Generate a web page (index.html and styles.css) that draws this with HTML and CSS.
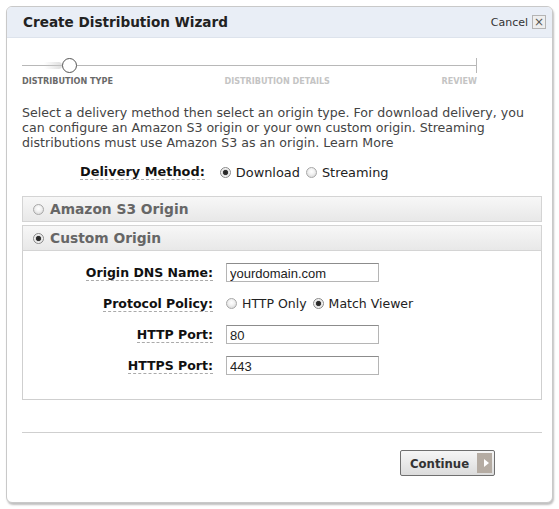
FILE: index.html
```
<!DOCTYPE html>
<html>
<head>
<meta charset="utf-8">
<link rel="stylesheet" href="styles.css">
</head>
<body>
<div class="dialog">
  <div class="header">
    <h1 class="title">Create Distribution Wizard</h1>
    <a class="cancel">Cancel <span class="close">×</span></a>
  </div>
  <div class="content">
    <div class="steps">
      <div class="track">
        <span class="trail"></span>
        <span class="knob"></span>
        <span class="tick"></span>
      </div>
      <div class="step-labels">
        <span class="step current">DISTRIBUTION TYPE</span>
        <span class="step">DISTRIBUTION DETAILS</span>
        <span class="step">REVIEW</span>
      </div>
    </div>
    <p class="intro">Select a delivery method then select an origin type. For download delivery, you can configure an Amazon S3 origin or your own custom origin. Streaming distributions must use Amazon S3 as an origin. <a class="link">Learn More</a></p>
    <div class="delivery">
      <span class="label">Delivery Method:</span>
      <label class="opt"><input type="radio" name="dm" checked> Download</label>
      <label class="opt"><input type="radio" name="dm"> Streaming</label>
    </div>
    <div class="accordion">
      <div class="acc-head"><input type="radio" name="origin"> Amazon S3 Origin</div>
      <div class="acc-head open"><input type="radio" name="origin" checked> Custom Origin</div>
      <div class="acc-panel">
        <div class="form-row">
          <span class="flabel"><span class="label">Origin DNS Name:</span></span>
          <input class="text" type="text" value="yourdomain.com">
        </div>
        <div class="form-row">
          <span class="flabel"><span class="label">Protocol Policy:</span></span>
          <span class="opts">
            <label class="opt"><input type="radio" name="pp"> HTTP Only</label>
            <label class="opt"><input type="radio" name="pp" checked> Match Viewer</label>
          </span>
        </div>
        <div class="form-row">
          <span class="flabel"><span class="label">HTTP Port:</span></span>
          <input class="text" type="text" value="80">
        </div>
        <div class="form-row">
          <span class="flabel"><span class="label">HTTPS Port:</span></span>
          <input class="text" type="text" value="443">
        </div>
      </div>
    </div>
    <div class="footer">
      <button class="continue"><span class="btn-text">Continue</span><span class="btn-arrow"></span></button>
    </div>
  </div>
</div>
</body>
</html>
```

FILE: styles.css
```
* { box-sizing: border-box; }
html, body { margin: 0; padding: 0; background: #fff; }
body {
  font-family: "DejaVu Sans", Verdana, sans-serif;
  color: #333;
  width: 559px;
  height: 509px;
  overflow: hidden;
}
.dialog {
  margin: 6px 0 0 6px;
  width: 547px;
  height: 497px;
  border: 1px solid #c9c9c9;
  border-radius: 6px;
  background: #fff;
  box-shadow: 1px 2px 2px rgba(0,0,0,0.25);
  overflow: hidden;
}
.header {
  height: 31px;
  background: #e9eef6;
  border-bottom: 1px solid #dde3ec;
  display: flex;
  align-items: center;
  justify-content: space-between;
  padding: 0 6px 0 16px;
}
.title {
  margin: 0;
  font-size: 13.6px;
  font-weight: bold;
  color: #222;
}
.cancel {
  display: flex;
  align-items: center;
  gap: 4px;
  font-size: 11px;
  color: #333;
}
.close {
  display: inline-flex;
  align-items: center;
  justify-content: center;
  width: 14px;
  height: 14px;
  border: 1px solid #b4b4b4;
  background: #eee;
  color: #555;
  font-size: 12px;
  line-height: 1;
}
.content {
  padding: 0 10px 0 15px;
}
.steps {
  width: 455px;
  margin-top: 20px;
}
.track {
  position: relative;
  height: 14px;
}
.track::before {
  content: "";
  position: absolute;
  left: 0;
  right: 0;
  top: 7px;
  height: 1px;
  background: #b8b8b8;
}
.trail {
  position: absolute;
  left: 22px;
  top: 4px;
  width: 18px;
  height: 7px;
  background: linear-gradient(to right, rgba(200,200,200,0), rgba(200,200,200,0.6));
  border-radius: 0 4px 4px 0;
}
.knob {
  position: absolute;
  left: 40px;
  top: 0;
  width: 15px;
  height: 15px;
  border-radius: 50%;
  border: 1px solid #555;
  background: #fff;
}
.tick {
  position: absolute;
  right: 0;
  top: 0;
  width: 1px;
  height: 15px;
  background: #b8b8b8;
}
.step-labels {
  display: flex;
  justify-content: space-between;
  margin-top: 3px;
}
.step {
  font-family: "DejaVu Sans Condensed", "DejaVu Sans", sans-serif;
  font-stretch: condensed;
  font-weight: bold;
  font-size: 9px;
  line-height: 12px;
  color: #c4c4c4;
}
.step.current { color: #6a6a6a; }
.intro {
  margin: 18px 0 0 0;
  font-size: 12.6px;
  line-height: 15px;
  color: #444;
  width: 505px;
}
.link { color: #444; }
.delivery {
  display: flex;
  align-items: center;
  margin-top: 12px;
  padding-left: 58px;
  font-size: 12.9px;
  height: 20px;
}
.label {
  font-weight: bold;
  color: #111;
  border-bottom: 1px dashed #aaa;
  line-height: 15px;
}
.delivery .label { margin-right: 15px; }
.opt {
  display: inline-flex;
  align-items: center;
  gap: 5px;
  margin-right: 6px;
  color: #222;
}
input[type=radio] {
  appearance: none;
  -webkit-appearance: none;
  margin: 0;
  width: 11px;
  height: 11px;
  border-radius: 50%;
  border: 1px solid #a8a8a8;
  background: radial-gradient(circle at 50% 40%, #fff 0, #f2f2f2 40%, #cfcfcf 100%);
  flex: none;
}
input[type=radio]:checked {
  border-color: #8a8a8a;
  background: radial-gradient(circle, #222 0, #333 2.2px, #dcdcdc 3px, #f5f5f5 4px, #c8c8c8 100%);
}
.accordion {
  margin-top: 14px;
  width: 520px;
}
.acc-head {
  display: flex;
  align-items: center;
  gap: 6px;
  height: 26px;
  padding-left: 10px;
  border: 1px solid #d4d4d4;
  background: linear-gradient(#f7f7f7, #e8e8e8);
  font-size: 13.8px;
  font-weight: bold;
  color: #666;
}
.acc-head.open { margin-top: 3px; }
.acc-panel {
  border: 1px solid #cfcfcf;
  border-top: none;
  height: 149px;
  padding-top: 12px;
}
.form-row {
  display: flex;
  align-items: center;
  height: 19px;
  margin-bottom: 12px;
  font-size: 12.5px;
}
.flabel {
  width: 190px;
  text-align: right;
  margin-right: 13px;
}
.opts { display: flex; align-items: center; }
.text {
  width: 153px;
  height: 19px;
  border: 1px solid #b5b5b5;
  border-top-color: #8c8c8c;
  padding: 1px 3px 0;
  font-family: "Liberation Sans", Arial, sans-serif;
  font-size: 13px;
  color: #222;
  background: #fff;
}
.footer {
  margin-top: 32px;
  width: 520px;
  border-top: 1px solid #cfcfcf;
  padding-top: 17px;
  display: flex;
  justify-content: flex-end;
  padding-right: 47px;
}
.continue {
  display: flex;
  align-items: center;
  gap: 8px;
  height: 26px;
  width: 95px;
  padding: 0 2px 0 9px;
  border: 1px solid #6f6f6f;
  border-radius: 2px;
  background: linear-gradient(#f6f6f6, #dcdcdc);
  font-family: "DejaVu Sans Condensed", "DejaVu Sans", sans-serif;
  font-weight: bold;
  font-size: 13px;
  color: #333;
}
.btn-arrow {
  position: relative;
  width: 18px;
  height: 20px;
  background: #b5aca3;
}
.btn-arrow::after {
  content: "";
  position: absolute;
  left: 7px;
  top: 6px;
  border-left: 5px solid #fff;
  border-top: 4px solid transparent;
  border-bottom: 4px solid transparent;
}
```
